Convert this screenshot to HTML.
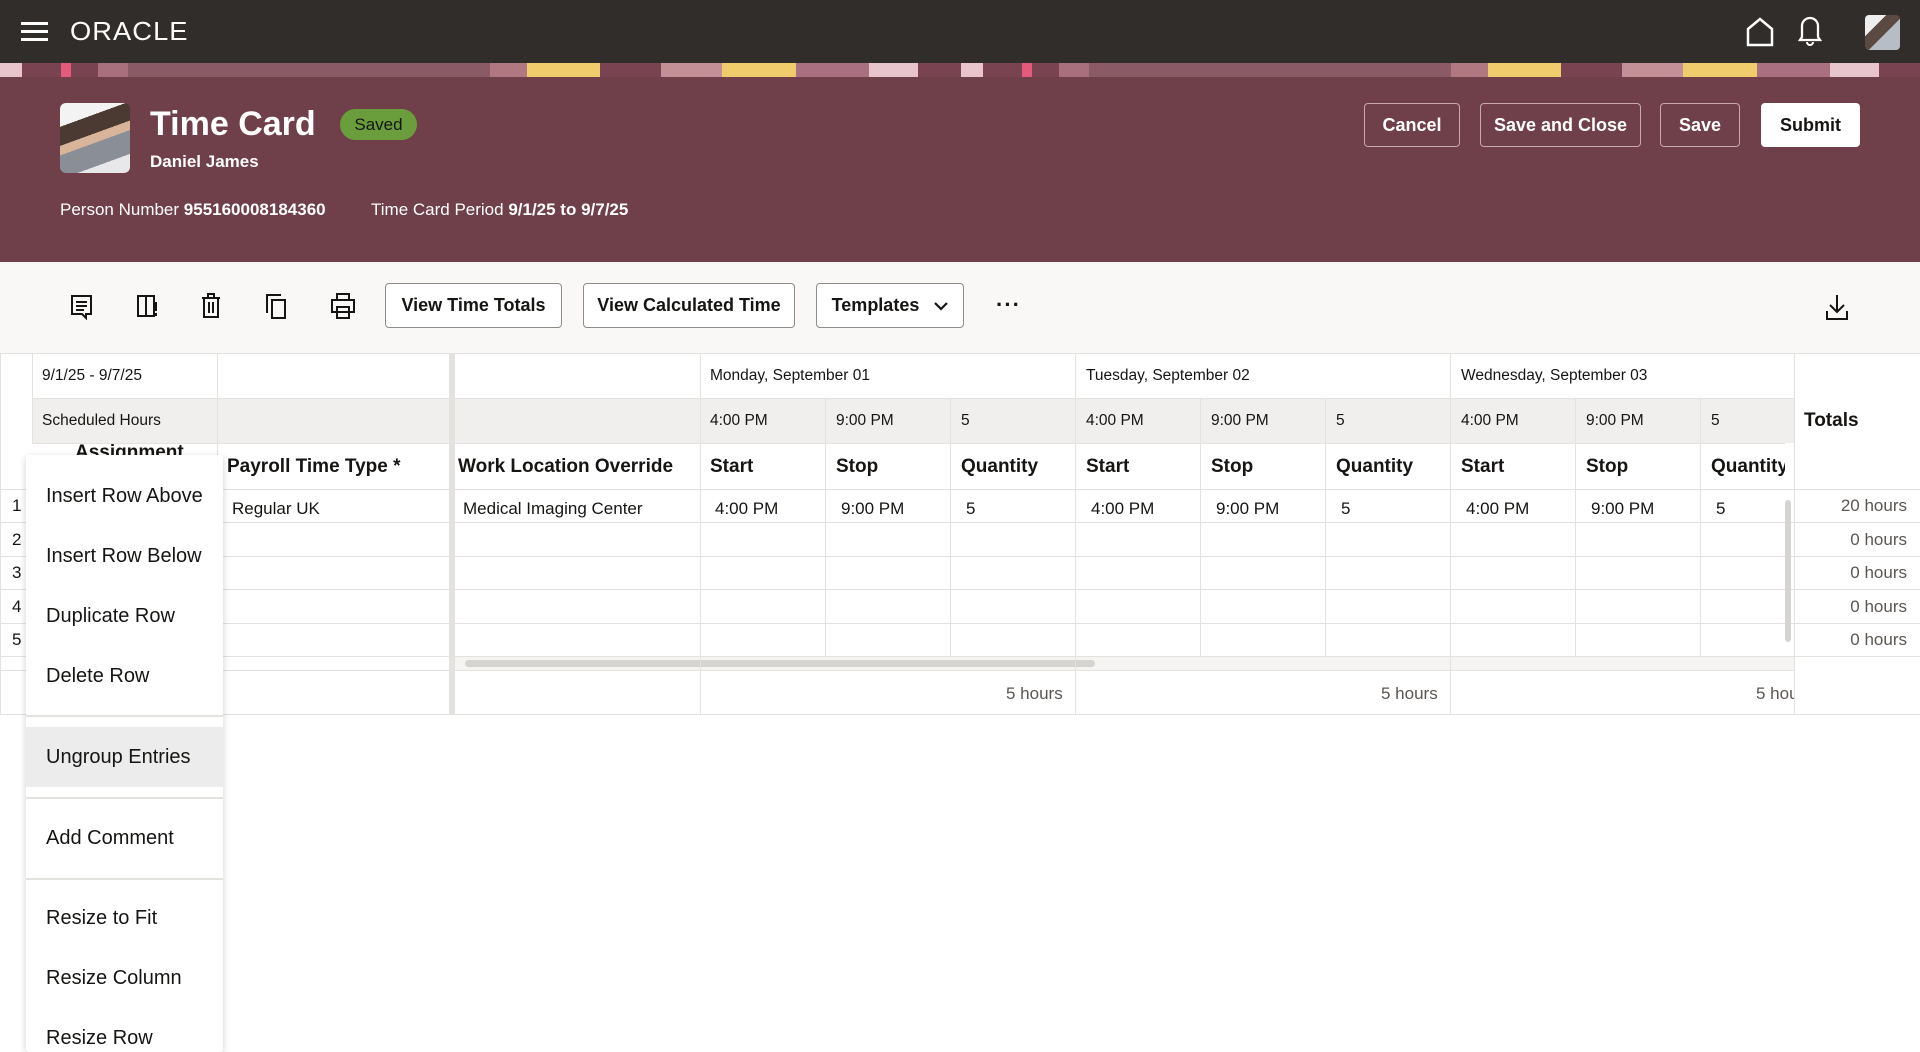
<!DOCTYPE html>
<html><head><meta charset="utf-8">
<style>
*{margin:0;padding:0;box-sizing:border-box}
body{width:1920px;height:1052px;overflow:hidden;background:#fff;font-family:"Liberation Sans",sans-serif;color:#161513;position:relative}
.abs{position:absolute}
.top{left:0;top:0;width:1920px;height:63px;background:#312d2a}
.strip{left:0;top:63px;width:1920px;height:14px;
background:linear-gradient(90deg,#e8c5cc 0 22px,#7a4352 22px 61px,#e25a7c 61px 71px,#7a4352 71px 98px,#a8707c 98px 128px,#8a5a66 128px 490px,#b07880 490px 527px,#f0cc6c 527px 600px,#7a4352 600px 661px,#c49098 661px 722px,#f0cc6c 722px 796px,#a87080 796px 869px,#e8c5cc 869px 918px,#7a4352 918px 961px);background-size:961px 14px;background-repeat:repeat-x}
.hdr{left:0;top:77px;width:1920px;height:185px;background:#6f3f4a}
.tb{left:0;top:262px;width:1920px;height:91px;background:#f9f8f6}
.btn{position:absolute;height:44px;border:1px solid #c7a9af;border-radius:4px;color:#fff;font-size:18px;font-weight:bold;display:flex;align-items:center;justify-content:center}
.tbtn{position:absolute;top:283px;height:45px;border:1px solid #8f8b87;border-radius:4px;background:#fff;font-size:18px;font-weight:bold;display:flex;align-items:center;justify-content:center;color:#161513}
.c{position:absolute;font-size:15.5px;white-space:nowrap}
.h{position:absolute;font-size:19px;font-weight:bold;white-space:nowrap}
.d{position:absolute;font-size:17px;white-space:nowrap}
.vl{position:absolute;width:1px;background:#e4e2df}
.hl{position:absolute;height:1px;background:#e4e2df}
.menu{left:26px;top:455px;width:197px;height:597px;background:#fff;box-shadow:0 2px 8px rgba(0,0,0,.18);border-radius:3px}
.mi{position:absolute;left:20px;font-size:20px;color:#161513;white-space:nowrap}
.ms{position:absolute;left:0;width:197px;height:2px;background:#e4e2df}
</style></head><body>
<div class="abs top"></div>
<svg class="abs" style="left:21px;top:21px" width="28" height="22"><rect y="1" width="27" height="3" fill="#fff"/><rect y="9" width="27" height="3" fill="#fff"/><rect y="17" width="27" height="3" fill="#fff"/></svg>
<div class="abs" style="left:70px;top:16px;color:#fff;font-size:26px;letter-spacing:1px;transform:scaleX(1.05);transform-origin:left">ORACLE</div>
<svg class="abs" style="left:1745px;top:17px" width="30" height="30"><path d="M3 28 V12 L15 2 L27 12 V28 Z" fill="none" stroke="#fff" stroke-width="2.5"/></svg>
<svg class="abs" style="left:1797px;top:15px" width="26" height="32"><path d="M5 22 V11 a8 8 0 0 1 16 0 V22 L23 25 H3 Z" fill="none" stroke="#fff" stroke-width="2.3"/><path d="M10 27 a3 3 0 0 0 6 0" fill="none" stroke="#fff" stroke-width="2"/></svg>
<div class="abs" style="left:1865px;top:15px;width:35px;height:35px;border-radius:4px;background:linear-gradient(135deg,#eee 0 30%,#5a4a42 30% 55%,#b8bcc4 55%)"></div>
<div class="abs strip"></div>
<div class="abs hdr"></div>
<div class="abs" style="left:60px;top:103px;width:70px;height:70px;border-radius:6px;background:linear-gradient(160deg,#f3f3f3 0 25%,#4a3a32 25% 45%,#d8b49a 45% 55%,#8a8e96 55% 80%,#e8e8ea 80%)"></div>
<div class="abs" style="left:150px;top:105px;color:#fff;font-size:34px;font-weight:bold">Time Card</div>
<div class="abs" style="left:340px;top:109px;width:77px;height:31px;border-radius:16px;background:#6a9d3b;color:#161513;font-size:17px;display:flex;align-items:center;justify-content:center">Saved</div>
<div class="abs" style="left:150px;top:152px;color:#fff;font-size:17px;font-weight:bold">Daniel James</div>
<div class="abs" style="left:60px;top:200px;color:#fff;font-size:17px">Person Number <b>955160008184360</b></div>
<div class="abs" style="left:371px;top:200px;color:#fff;font-size:17px">Time Card Period <b>9/1/25 to 9/7/25</b></div>
<div class="btn" style="left:1364px;top:103px;width:96px">Cancel</div>
<div class="btn" style="left:1480px;top:103px;width:161px">Save and Close</div>
<div class="btn" style="left:1660px;top:103px;width:80px">Save</div>
<div class="btn" style="left:1761px;top:103px;width:99px;background:#fff;border-color:#fff;color:#161513">Submit</div>
<div class="abs tb"></div>
<svg class="abs" style="left:70px;top:294px" width="24" height="26" fill="none" stroke="#161513" stroke-width="2"><path d="M2 2 H21 V20 H16 V24 L12 20 H2 Z"/><path d="M6 8 H17 M6 12 H17 M6 16 H14"/></svg>
<svg class="abs" style="left:136px;top:294px" width="24" height="26" fill="none" stroke="#161513" stroke-width="2"><path d="M2 2 H18 V22 H2 Z M10 2 V22"/><path d="M20 8 V17 M20 19 V22" /></svg>
<svg class="abs" style="left:200px;top:292px" width="24" height="28" fill="none" stroke="#161513" stroke-width="2"><path d="M2 6 H20 M8 6 V2 H14 V6 M4 6 V25 H18 V6 M9 10 V21 M13 10 V21"/></svg>
<svg class="abs" style="left:265px;top:293px" width="24" height="28" fill="none" stroke="#161513" stroke-width="2"><path d="M2 20 V2 H16"/><path d="M7 7 H20 V25 H7 Z"/></svg>
<svg class="abs" style="left:330px;top:292px" width="26" height="28" fill="none" stroke="#161513" stroke-width="2"><path d="M7 8 V2 H19 V8 M2 8 H24 V20 H2 Z M7 15 H19 V26 H7 Z"/></svg>
<div class="tbtn" style="left:385px;width:177px">View Time Totals</div>
<div class="tbtn" style="left:583px;width:212px">View Calculated Time</div>
<div class="tbtn" style="left:816px;width:148px">Templates&nbsp;&nbsp;&nbsp;<svg width="14" height="10" fill="none" stroke="#161513" stroke-width="2.2"><path d="M1 2 L7 8 L13 2"/></svg></div>
<div class="abs" style="left:996px;top:292px;font-size:22px;font-weight:bold;letter-spacing:1px">···</div>
<svg class="abs" style="left:1825px;top:293px" width="24" height="28" fill="none" stroke="#161513" stroke-width="2"><path d="M12 2 V19 M5 12 L12 19 L19 12 M2 18 V26 H22 V18"/></svg>

<div class="abs" style="left:32px;top:398px;width:1762px;height:45px;background:#f1efed"></div>
<div class="hl" style="left:0;top:353px;width:1920px"></div>
<div class="hl" style="left:32px;top:398px;width:1762px"></div>
<div class="hl" style="left:32px;top:443px;width:1762px"></div>
<div class="hl" style="left:0;top:489px;width:1920px"></div>
<div class="hl" style="left:0;top:522px;width:1920px"></div>
<div class="hl" style="left:0;top:556px;width:1920px"></div>
<div class="hl" style="left:0;top:589px;width:1920px"></div>
<div class="hl" style="left:0;top:623px;width:1920px"></div>
<div class="hl" style="left:0;top:656px;width:1920px"></div>
<div class="hl" style="left:0;top:670px;width:1794px"></div>
<div class="hl" style="left:0;top:714px;width:1920px"></div>
<div class="abs" style="left:455px;top:657px;width:1339px;height:13px;background:#f5f4f2"></div>
<div class="abs" style="left:465px;top:660px;width:630px;height:7px;border-radius:4px;background:#d6d4d1"></div>
<div class="abs" style="left:1785px;top:500px;width:6px;height:142px;border-radius:3px;background:#d6d4d1"></div>
<div class="vl" style="left:0;top:353px;height:361px"></div>
<div class="vl" style="left:32px;top:353px;height:90px"></div>
<div class="vl" style="left:217px;top:353px;height:361px"></div>
<div class="abs" style="left:449px;top:353px;width:6px;height:361px;background:#e4e2df"></div>
<div class="vl" style="left:700px;top:353px;height:361px"></div>
<div class="vl" style="left:825px;top:398px;height:258px"></div>
<div class="vl" style="left:950px;top:398px;height:258px"></div>
<div class="vl" style="left:1075px;top:353px;height:361px"></div>
<div class="vl" style="left:1200px;top:398px;height:258px"></div>
<div class="vl" style="left:1325px;top:398px;height:258px"></div>
<div class="vl" style="left:1450px;top:353px;height:361px"></div>
<div class="vl" style="left:1575px;top:398px;height:258px"></div>
<div class="vl" style="left:1700px;top:398px;height:258px"></div>
<div class="vl" style="left:1794px;top:353px;height:361px"></div>

<div class="c" style="left:42px;top:367px">9/1/25 - 9/7/25</div>
<div class="c" style="left:710px;top:367px">Monday, September 01</div>
<div class="c" style="left:1086px;top:367px">Tuesday, September 02</div>
<div class="c" style="left:1461px;top:367px">Wednesday, September 03</div>
<div class="c" style="left:42px;top:412px">Scheduled Hours</div>
<div class="c" style="left:710px;top:412px">4:00 PM</div><div class="c" style="left:836px;top:412px">9:00 PM</div><div class="c" style="left:961px;top:412px">5</div>
<div class="c" style="left:1086px;top:412px">4:00 PM</div><div class="c" style="left:1211px;top:412px">9:00 PM</div><div class="c" style="left:1336px;top:412px">5</div>
<div class="c" style="left:1461px;top:412px">4:00 PM</div><div class="c" style="left:1586px;top:412px">9:00 PM</div><div class="c" style="left:1711px;top:412px">5</div>
<div class="h" style="left:1804px;top:410px">Totals</div>
<div class="h" style="left:75px;top:442px">Assignment</div>
<div class="h" style="left:227px;top:456px">Payroll Time Type *</div>
<div class="h" style="left:458px;top:456px">Work Location Override</div>
<div class="h" style="left:710px;top:456px">Start</div><div class="h" style="left:836px;top:456px">Stop</div><div class="h" style="left:961px;top:456px">Quantity</div>
<div class="h" style="left:1086px;top:456px">Start</div><div class="h" style="left:1211px;top:456px">Stop</div><div class="h" style="left:1336px;top:456px">Quantity</div>
<div class="h" style="left:1461px;top:456px">Start</div><div class="h" style="left:1586px;top:456px">Stop</div><div class="h" style="left:1711px;top:456px">Quantity</div>
<div class="abs" style="left:1785px;top:443px;width:9px;height:46px;background:#fff"></div>
<div class="d" style="left:12px;top:496px">1</div><div class="d" style="left:12px;top:530px">2</div><div class="d" style="left:12px;top:563px">3</div><div class="d" style="left:12px;top:597px">4</div><div class="d" style="left:12px;top:630px">5</div>
<div class="d" style="left:232px;top:499px">Regular UK</div>
<div class="d" style="left:463px;top:499px">Medical Imaging Center</div>
<div class="d" style="left:715px;top:499px">4:00 PM</div><div class="d" style="left:841px;top:499px">9:00 PM</div><div class="d" style="left:966px;top:499px">5</div>
<div class="d" style="left:1091px;top:499px">4:00 PM</div><div class="d" style="left:1216px;top:499px">9:00 PM</div><div class="d" style="left:1341px;top:499px">5</div>
<div class="d" style="left:1466px;top:499px">4:00 PM</div><div class="d" style="left:1591px;top:499px">9:00 PM</div><div class="d" style="left:1716px;top:499px">5</div>
<div class="d" style="right:13px;top:496px;color:#5b5652">20 hours</div>
<div class="d" style="right:13px;top:530px;color:#5b5652">0 hours</div>
<div class="d" style="right:13px;top:563px;color:#5b5652">0 hours</div>
<div class="d" style="right:13px;top:597px;color:#5b5652">0 hours</div>
<div class="d" style="right:13px;top:630px;color:#5b5652">0 hours</div>
<div class="d" style="left:1006px;top:684px;color:#5b5652">5 hours</div>
<div class="d" style="left:1381px;top:684px;color:#5b5652">5 hours</div>
<div class="abs" style="left:1450px;top:671px;width:344px;height:43px;overflow:hidden"><div class="d" style="left:306px;top:13px;color:#5b5652">5 hours</div></div>

<div class="abs menu">
<div class="mi" style="top:30px">Insert Row Above</div>
<div class="mi" style="top:90px">Insert Row Below</div>
<div class="mi" style="top:150px">Duplicate Row</div>
<div class="mi" style="top:210px">Delete Row</div>
<div class="ms" style="top:260px"></div>
<div class="abs" style="left:0;top:272px;width:197px;height:60px;background:#ececec"></div>
<div class="mi" style="top:291px">Ungroup Entries</div>
<div class="ms" style="top:342px"></div>
<div class="mi" style="top:372px">Add Comment</div>
<div class="ms" style="top:423px"></div>
<div class="mi" style="top:452px">Resize to Fit</div>
<div class="mi" style="top:512px">Resize Column</div>
<div class="mi" style="top:572px">Resize Row</div>
</div>
</body></html>
